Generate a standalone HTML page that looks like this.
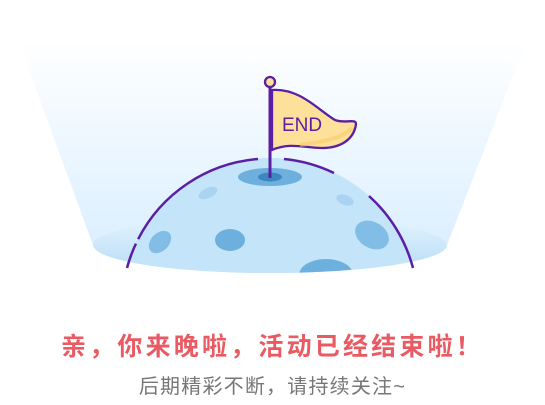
<!DOCTYPE html>
<html><head><meta charset="utf-8"><style>
html,body{margin:0;padding:0;background:#fff;width:545px;height:405px;overflow:hidden;position:relative}
.t{position:absolute;left:0;width:545px;text-align:center;font-family:"Liberation Sans","Noto Sans CJK SC",sans-serif;white-space:nowrap;line-height:1.2}
.r{top:332px;font-size:25px;font-weight:bold;color:#e95a63;letter-spacing:3.2px}
.g{top:375px;font-size:20px;color:#777;letter-spacing:1.2px}
</style></head><body>
<svg width="545" height="320" style="position:absolute;left:0;top:0">
<defs>
<linearGradient id="beam" x1="0" y1="0" x2="0" y2="1">
<stop offset="0" stop-color="#fff"/><stop offset="1" stop-color="#dcefff"/>
</linearGradient>
<linearGradient id="base" x1="0" y1="0" x2="0" y2="1">
<stop offset="0" stop-color="#e4f3fd"/><stop offset="1" stop-color="#b7dcf6"/>
</linearGradient>
<clipPath id="dome"><rect x="0" y="0" width="545" height="245"/><ellipse cx="270" cy="245" rx="177" ry="28"/></clipPath>
</defs>
<path d="M18 40 L527 40 L447 245 L93 245 Z" fill="url(#beam)"/>
<ellipse cx="270" cy="245" rx="177" ry="28" fill="url(#base)"/>
<g clip-path="url(#dome)">
<circle cx="270" cy="306" r="148" fill="#c4e4f9"/>
<ellipse cx="270" cy="177" rx="32" ry="9" fill="#6eb0dd"/>
<ellipse cx="270" cy="177" rx="12" ry="4.5" fill="#3d86c0"/>
<ellipse cx="208" cy="193" rx="10" ry="5" fill="#a9d3f1" transform="rotate(-25 208 193)"/>
<ellipse cx="345" cy="200" rx="9" ry="5" fill="#a9d3f1" transform="rotate(20 345 200)"/>
<ellipse cx="160" cy="242" rx="9" ry="13" fill="#82bde6" transform="rotate(45 160 242)"/>
<ellipse cx="230" cy="240" rx="15" ry="11" fill="#6eb0dd"/>
<ellipse cx="372" cy="235" rx="18" ry="13" fill="#82bde6" transform="rotate(30 372 235)"/>
<ellipse cx="326" cy="275" rx="27" ry="16" fill="#6eb0dd"/>
</g>
<path d="M127 268 A148 148 0 0 1 258 159" fill="none" stroke="#5a1fa3" stroke-width="2.5" stroke-dasharray="26 5 400"/>
<path d="M284 159 A148 148 0 0 1 334 173" fill="none" stroke="#5a1fa3" stroke-width="2.5"/>
<path d="M369 196 A148 148 0 0 1 413 268" fill="none" stroke="#5a1fa3" stroke-width="2.5"/>
<path d="M272 90 C300 88 318 110 335 120 C345 124 356 118 356 124 C354 140 340 148 322 148 C305 148 290 142 272 150 Z" fill="#fde099" stroke="#5a1fa3" stroke-width="2.3" stroke-linejoin="round"/>
<path d="M300 145 C320 142 340 140 352 128" fill="none" stroke="#f8c96a" stroke-width="4" opacity="0.6"/>
<line x1="270" y1="87" x2="270" y2="178" stroke="#5a1fa3" stroke-width="3"/>
<circle cx="270" cy="82" r="5" fill="#fde099" stroke="#5a1fa3" stroke-width="2.3"/>
<text x="302" y="131" text-anchor="middle" font-family="Liberation Sans,sans-serif" font-size="19" fill="#5a1fa3">END</text>
</svg>
<div class="t r">亲，你来晚啦，活动已经结束啦！</div>
<div class="t g">后期精彩不断，请持续关注~</div>
</body></html>
